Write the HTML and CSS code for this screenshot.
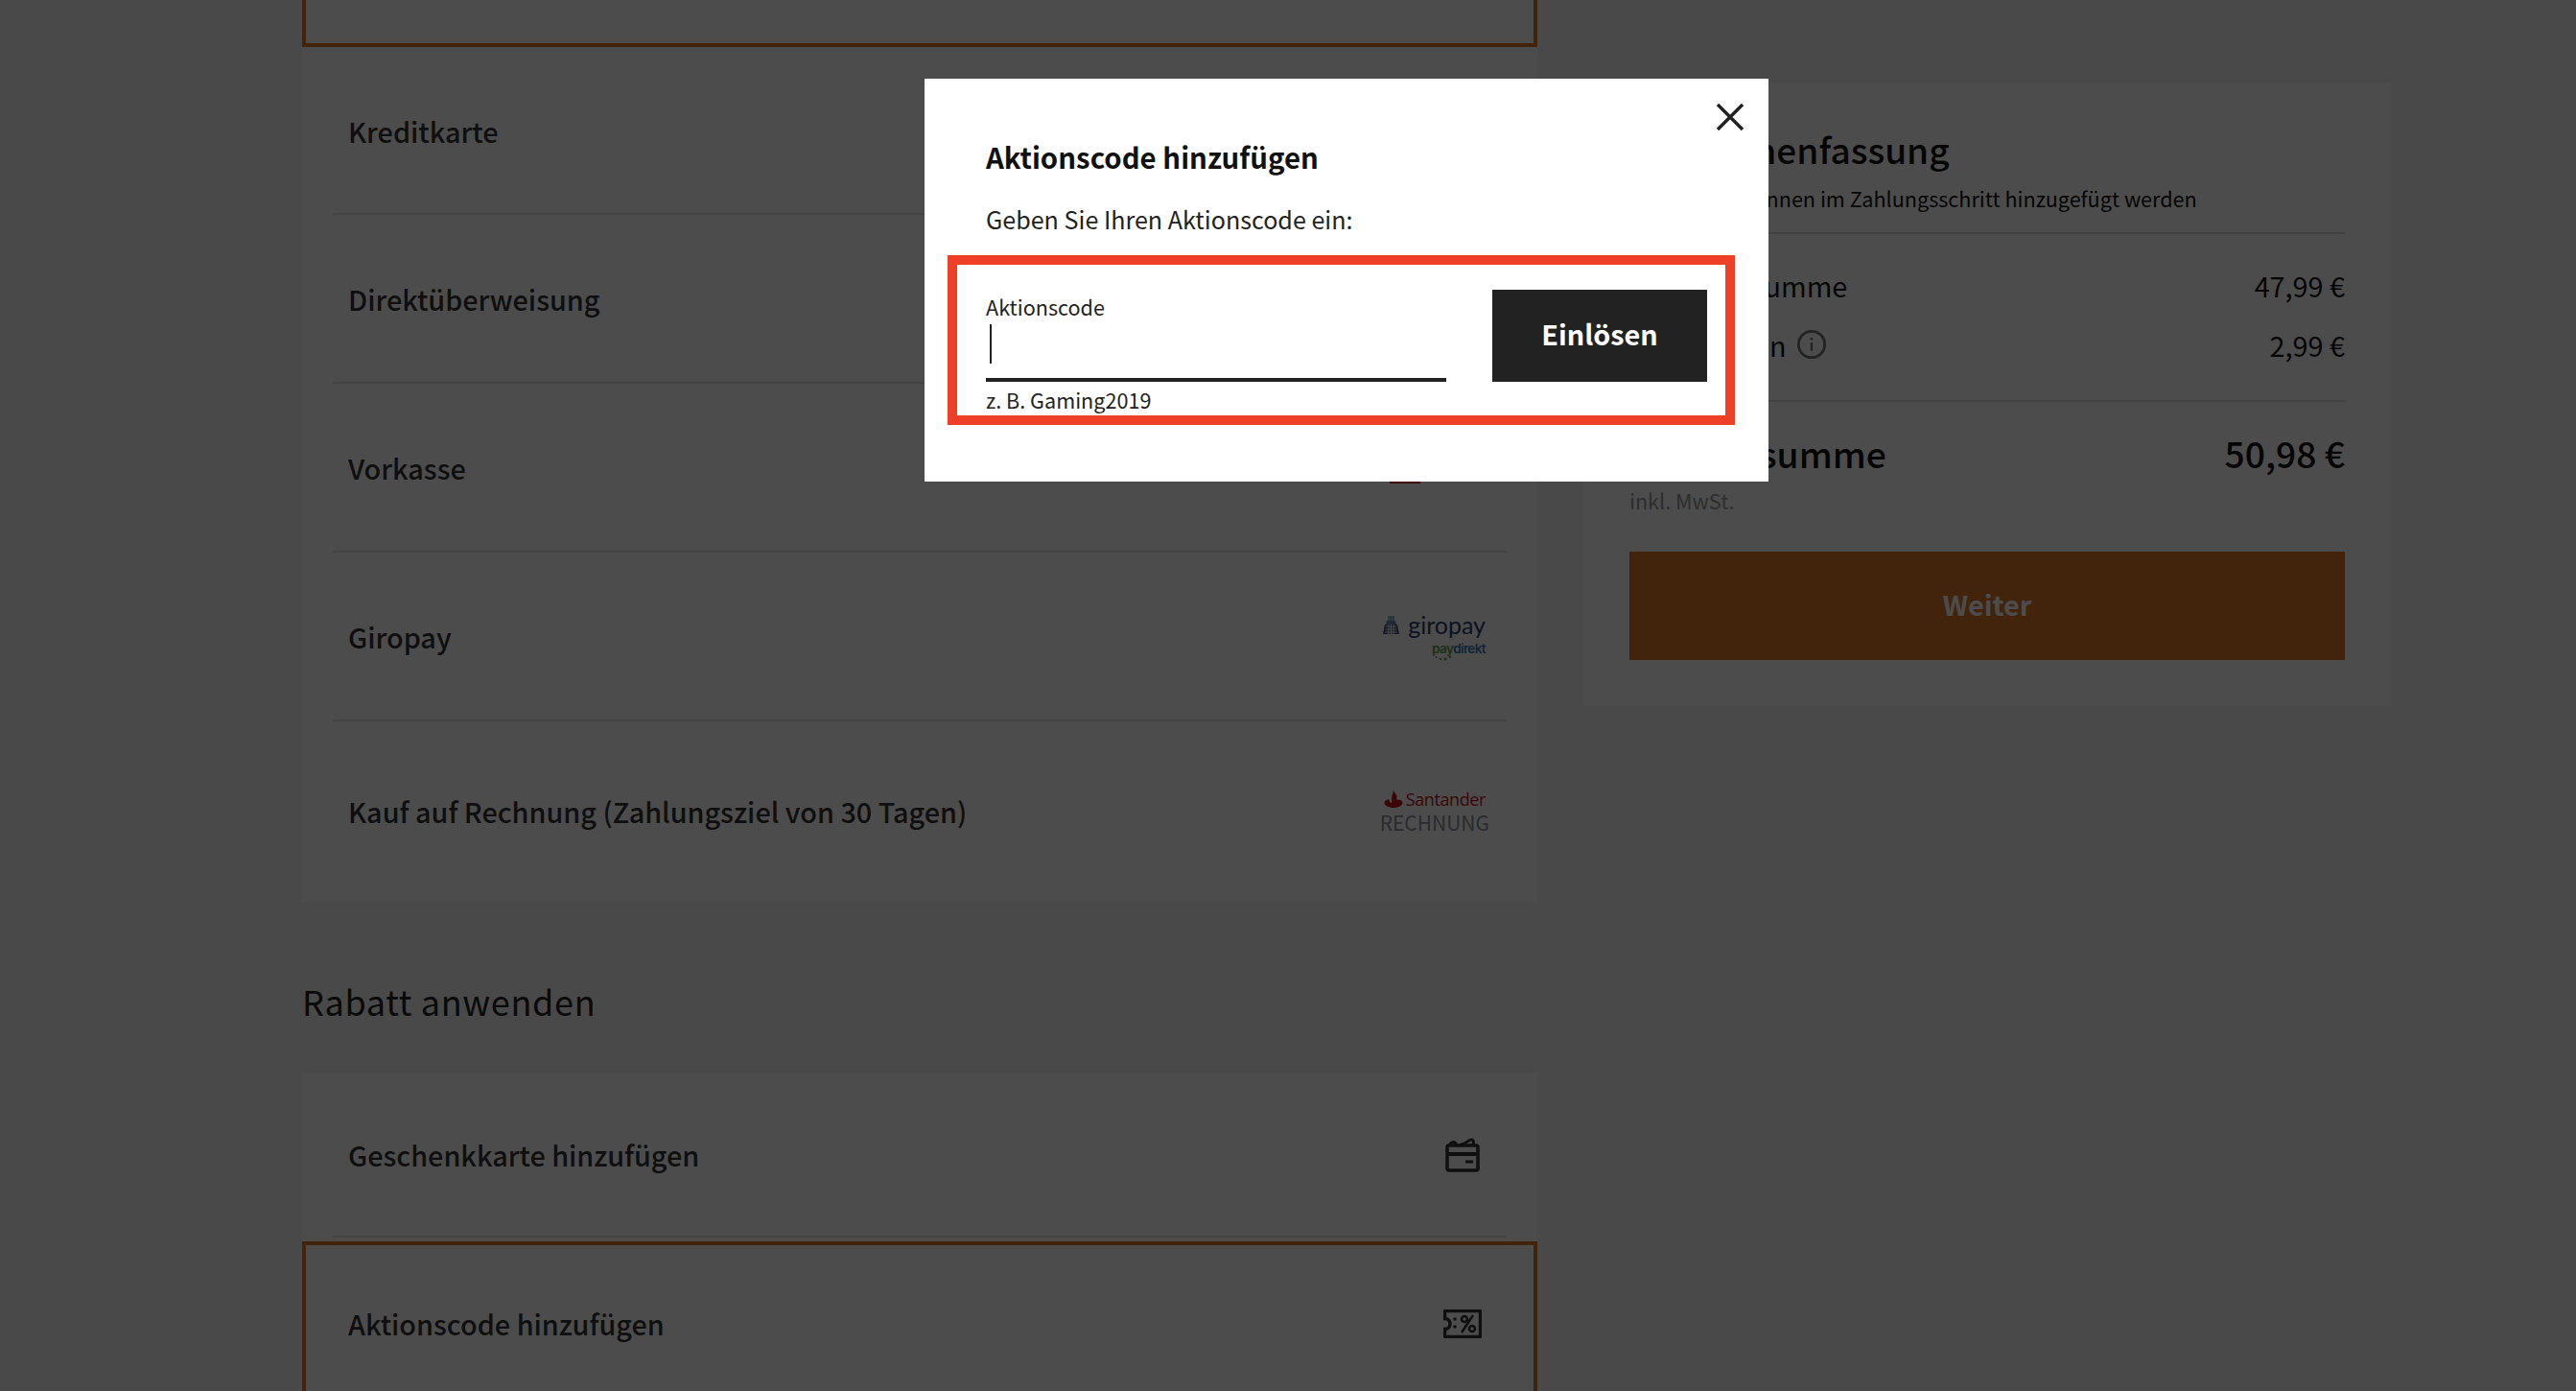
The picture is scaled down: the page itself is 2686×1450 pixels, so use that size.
FILE: index.html
```html
<!DOCTYPE html>
<html lang="de">
<head>
    <meta charset="UTF-8" />
    <title>Zahlung</title>
    <link rel="stylesheet" href="styles.css">
</head>
<body>

<div class="page">
    <div class="main-col">
        <div class="card">
            <div class="row row-selected row-cut-top"></div>
            <div class="row row-line row-first">
                <span class="row-label">Kreditkarte</span>
            </div>
            <div class="row row-line">
                <span class="row-label">Direktüberweisung</span>
            </div>
            <div class="row row-line">
                <span class="row-label">Vorkasse</span>
                <div class="logo-vorkasse"></div>
            </div>
            <div class="row row-line">
                <span class="row-label">Giropay</span>
                <div class="logo-giropay">
                    <div class="giro-top">
                        <svg class="giro-bank" viewBox="0 0 17 19" width="17" height="19">
                            <rect x="5" y="0" width="7" height="5" fill="#88b8d8"/>
                            <path d="M4 5h9l1 4H3z" fill="#6f8fb5"/>
                            <path d="M2 9h13l2 10H0z" fill="#3e5578"/>
                            <path d="M3 11h11M2.500 14h12M2 17h13M6 9v10M8.500 9v10M11 9v10" stroke="#fff" stroke-width="1" fill="none"/>
                        </svg>
                        <span class="giro-text">giropay</span>
                    </div>
                    <div class="paydirekt">
                        <span class="pay">pay</span><span class="direkt">direkt</span>
                        <svg class="pay-dots" viewBox="0 0 18 6" width="18" height="6">
                            <circle cx="1.500" cy="2" r="1" fill="#5aa04a"/>
                            <circle cx="6" cy="4" r="1.200" fill="#5aa04a"/>
                            <circle cx="11" cy="4" r="1.600" fill="#5aa04a"/>
                            <circle cx="16" cy="2" r="1.200" fill="#5aa04a"/>
                        </svg>
                    </div>
                </div>
            </div>
            <div class="row row-last">
                <span class="row-label">Kauf auf Rechnung (Zahlungsziel von 30 Tagen)</span>
                <div class="logo-santander">
                    <div class="sant-top">
                        <svg viewBox="0 0 20 18" width="20" height="18">
                            <path d="M10 0c1 2 3 4 3.500 6 .4 1.500 0 2.500-.5 3.500 3-.5 6 .5 6.500 3 .4 3-4.500 5.500-9.500 5.500S0 15.500.5 12.500c.3-2 2.500-3 5-3.300-.5 1 .5 2.500 2 4 .7-1 .9-2.500.5-4C7.500 7 9.500 3 10 0z" fill="#c81414"/>
                        </svg>
                        <span class="sant-text">Santander</span>
                    </div>
                    <div class="rechnung">RECHNUNG</div>
                </div>
            </div>
        </div>

        <h2 class="discount-title">Rabatt anwenden</h2>

        <div class="card">
            <div class="row row-line row-gift">
                <span class="row-label">Geschenkkarte hinzufügen</span>
                <svg class="icon-gift" viewBox="0 0 36 36" width="36" height="36" fill="none" stroke="#333" stroke-width="3.500">
                    <rect x="2" y="8" width="32" height="26" rx="2"/>
                    <path d="M2 17h32" stroke-width="4"/>
                    <path d="M21 25h8" stroke-width="3"/>
                    <path d="M5 8c0-4 5-5 7 0M14 8l6-2c2-1 5-4 7-4 3 0 3 4 1 6" stroke-width="3"/>
                </svg>
            </div>
            <div class="row row-selected row-promo">
                <span class="row-label">Aktionscode hinzufügen</span>
                <svg class="icon-ticket" viewBox="0 0 40 30" width="40" height="30" fill="none" stroke="#333" stroke-width="3.500">
                    <path d="M2.500 1.500h35a1 1 0 0 1 1 1v25a1 1 0 0 1-1 1h-35a1 1 0 0 1-1-1v-7a5.500 5.500 0 0 0 0-11v-7a1 1 0 0 1 1-1z"/>
                    <circle cx="12" cy="10" r="1.700" fill="#333" stroke="none"/>
                    <circle cx="12" cy="18" r="1.700" fill="#333" stroke="none"/>
                    <circle cx="22" cy="10" r="3" stroke-width="2.500"/>
                    <circle cx="30" cy="20" r="3" stroke-width="2.500"/>
                    <path d="M31 6L19 24" stroke-width="2.500"/>
                </svg>
            </div>
        </div>
    </div>

    <aside class="summary">
        <h2 class="summary-title">Zusammenfassung</h2>
        <p class="summary-note">Gutscheine können im Zahlungsschritt hinzugefügt werden</p>
        <div class="summary-lines">
            <div class="line"><span>Zwischensumme</span><span>47,99 €</span></div>
            <div class="line">
                <span class="line-left">Portokosten
                    <svg class="icon-info" viewBox="0 0 34 34" width="32" height="32" fill="none" stroke="#777" stroke-width="3">
                        <circle cx="17" cy="17" r="14.500"/>
                        <path d="M17 15v9" stroke-width="2.500"/>
                        <circle cx="17" cy="11" r="1.500" fill="#777" stroke="none"/>
                    </svg>
                </span>
                <span>2,99 €</span>
            </div>
        </div>
        <div class="total"><span>Gesamtsumme</span><span>50,98 €</span></div>
        <div class="vat">inkl. MwSt.</div>
        <button class="btn-next" type="button">Weiter</button>
    </aside>
</div>

<div class="overlay"></div>

<div class="modal">
    <svg class="modal-close" viewBox="0 0 28 28" width="28" height="28" fill="none" stroke="#222" stroke-width="3.500">
        <path d="M1 1l26 26M27 1L1 27"/>
    </svg>
    <h3 class="modal-title">Aktionscode hinzufügen</h3>
    <p class="modal-text">Geben Sie Ihren Aktionscode ein:</p>
    <div class="code-box">
        <div class="code-field">
            <label class="code-label">Aktionscode</label>
            <div class="code-input"><span class="caret"></span></div>
            <div class="code-hint">z. B. Gaming2019</div>
        </div>
        <button class="btn-redeem" type="button">Einlösen</button>
    </div>
</div>

</body>
</html>
```

FILE: styles.css
```css
* {
    box-sizing: border-box;
}
html, body {
    margin: 0;
    height: 1450px;
    overflow: hidden;
}
body {
    font-family: "Noto Sans CJK SC", "Noto Sans", sans-serif;
    background-color: #f4f4f4;
    color: #111;
}
.page {
    display: flex;
    align-items: flex-start;
    gap: 48px;
    padding-left: 315px;
}
.main-col {
    width: 1288px;
    flex-shrink: 0;
}
.card {
    background-color: #fff;
}
.row {
    display: flex;
    justify-content: space-between;
    align-items: center;
    padding: 0 48px;
    height: 176px;
    position: relative;
}
.row-line::after {
    content: "";
    position: absolute;
    left: 32px;
    right: 32px;
    bottom: 0;
    height: 2px;
    background-color: #e2e2e2;
}
.row-first {
    height: 175px;
}
.row-last {
    height: 188px;
}
.row-label {
    font-size: 28.8px;
    line-height: 40px;
    font-weight: 500;
    color: #333;
}
.row-selected {
    border: 4px solid #dc7b28;
    padding: 0 44px;
}
.row-cut-top {
    border-top: none;
    height: 49px;
}
.row-gift {
    height: 172px;
    padding-right: 60px;
}
.row-promo {
    margin-top: 4px;
    height: 172px;
    padding-right: 54px;
}
.discount-title {
    margin: 0;
    padding: 77px 0 49px;
    font-size: 36px;
    line-height: 52px;
    font-weight: 400;
    letter-spacing: 0.7px;
    color: #222;
}

/* payment logos */
.logo-vorkasse {
    width: 32px;
    height: 10px;
    margin: 22px 74px 0 0;
    background-color: #d81c1c;
}
.logo-giropay {
    display: flex;
    flex-direction: column;
    align-items: flex-end;
    margin: -3px 6px 0 0;
}
.giro-top {
    display: flex;
    align-items: center;
    gap: 9px;
    margin-bottom: 3px;
}
.giro-text {
    font-family: "Lato", sans-serif;
    font-size: 25px;
    line-height: 30px;
    color: #2b3f70;
}
.paydirekt {
    font-family: "Inter", sans-serif;
    font-size: 13.5px;
    line-height: 14px;
    font-weight: 600;
    letter-spacing: -0.6px;
}
.pay {
    color: #5aa04a;
}
.direkt {
    color: #3a7ab0;
}
.pay-dots {
    display: block;
    margin: 0 0 0 3px;
}
.logo-santander {
    display: flex;
    flex-direction: column;
    align-items: center;
    margin-right: 2px;
}
.sant-top {
    display: flex;
    align-items: center;
    gap: 3px;
}
.sant-text {
    font-family: "Open Sans", sans-serif;
    font-size: 18px;
    line-height: 22px;
    color: #c81414;
    letter-spacing: -0.4px;
}
.rechnung {
    font-size: 21px;
    line-height: 26px;
    color: #8c929c;
}

/* summary box */
.summary {
    width: 842px;
    margin-top: 86px;
    padding: 48px;
    background-color: #fff;
}
.summary-title {
    margin: -2px 0 0;
    font-size: 37px;
    line-height: 46px;
    font-weight: 500;
}
.summary-note {
    margin: 12px 0 0;
    padding-bottom: 18px;
    font-size: 21.6px;
    line-height: 34px;
    border-bottom: 2px solid #ddd;
}
.summary-lines {
    padding: 22px 0 27px;
    border-bottom: 2px solid #ddd;
}
.line {
    display: flex;
    justify-content: space-between;
    align-items: center;
    height: 62px;
    font-size: 28.8px;
}
.line-left {
    display: flex;
    align-items: center;
    gap: 10px;
}
.total {
    display: flex;
    justify-content: space-between;
    margin-top: 27px;
    font-size: 37.2px;
    line-height: 52px;
    font-weight: 500;
}
.vat {
    margin-top: 8px;
    font-size: 21.6px;
    line-height: 32px;
    color: #999;
}
.btn-next {
    display: block;
    width: 100%;
    height: 113px;
    margin-top: 37px;
    padding: 0 0 5px;
    border: none;
    background-color: #dc7b28;
    color: #fff;
    font-family: inherit;
    font-size: 28.8px;
    font-weight: 700;
}

/* modal on top of everything */
.overlay {
    position: fixed;
    top: 0;
    left: 0;
    right: 0;
    bottom: 0;
    background-color: rgba(0, 0, 0, 0.7);
}
.modal {
    position: fixed;
    left: 964px;
    top: 82px;
    width: 880px;
    height: 420px;
    padding: 58px 24px 0 64px;
    background-color: #fff;
    color: #222;
}
.modal-close {
    position: absolute;
    top: 26px;
    right: 26px;
}
.modal-title {
    margin: 0;
    font-size: 29.4px;
    line-height: 46px;
    font-weight: 700;
    color: #111;
}
.modal-text {
    margin: 22px 0 0;
    font-size: 25.1px;
    line-height: 40px;
}
.code-box {
    display: flex;
    justify-content: space-between;
    width: 821px;
    height: 177px;
    margin: 18px 0 0 -40px;
    padding: 26px 19px 0 30px;
    border: 10px solid #ee4026;
}
.code-field {
    width: 480px;
    padding-top: 4px;
}
.code-label {
    display: block;
    font-size: 21.6px;
    line-height: 28px;
}
.code-input {
    height: 64px;
    padding: 4px 0 0 4px;
    border-bottom: 4px solid #222;
}
.caret {
    display: block;
    width: 2px;
    height: 41px;
    background-color: #222;
}
.code-hint {
    margin-top: 4px;
    font-size: 21.6px;
    line-height: 30px;
}
.btn-redeem {
    width: 224px;
    height: 96px;
    padding: 0 0 5px;
    border: none;
    background-color: #222;
    color: #fff;
    font-family: inherit;
    font-size: 28.8px;
    font-weight: 700;
}
```
